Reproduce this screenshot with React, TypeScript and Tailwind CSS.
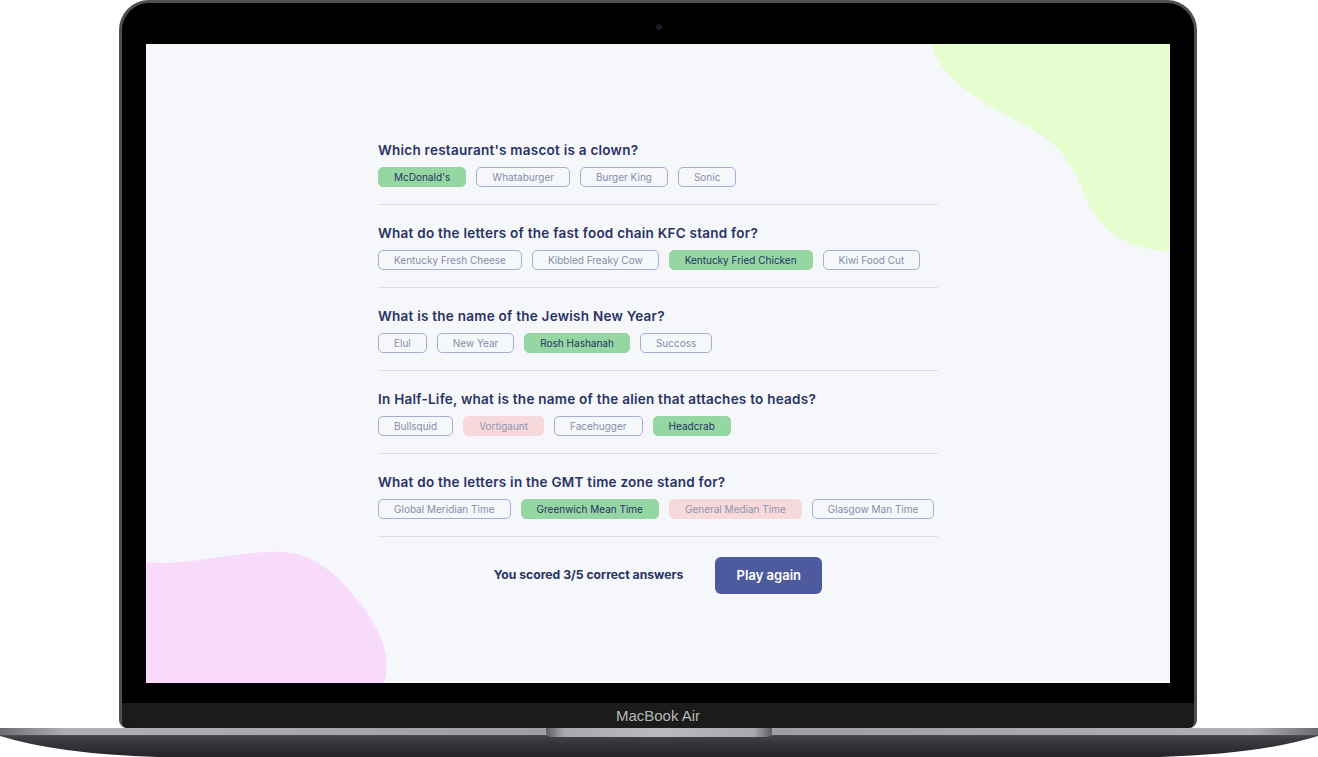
import React from "react";

type Ans = { text: string; state: "none" | "correct" | "wrong" };
type Q = { q: string; answers: Ans[] };

const questions: Q[] = [
  {
    q: "Which restaurant's mascot is a clown?",
    answers: [
      { text: "McDonald's", state: "correct" },
      { text: "Whataburger", state: "none" },
      { text: "Burger King", state: "none" },
      { text: "Sonic", state: "none" },
    ],
  },
  {
    q: "What do the letters of the fast food chain KFC stand for?",
    answers: [
      { text: "Kentucky Fresh Cheese", state: "none" },
      { text: "Kibbled Freaky Cow", state: "none" },
      { text: "Kentucky Fried Chicken", state: "correct" },
      { text: "Kiwi Food Cut", state: "none" },
    ],
  },
  {
    q: "What is the name of the Jewish New Year?",
    answers: [
      { text: "Elul", state: "none" },
      { text: "New Year", state: "none" },
      { text: "Rosh Hashanah", state: "correct" },
      { text: "Succoss", state: "none" },
    ],
  },
  {
    q: "In Half-Life, what is the name of the alien that attaches to heads?",
    answers: [
      { text: "Bullsquid", state: "none" },
      { text: "Vortigaunt", state: "wrong" },
      { text: "Facehugger", state: "none" },
      { text: "Headcrab", state: "correct" },
    ],
  },
  {
    q: "What do the letters in the GMT time zone stand for?",
    answers: [
      { text: "Global Meridian Time", state: "none" },
      { text: "Greenwich Mean Time", state: "correct" },
      { text: "General Median Time", state: "wrong" },
      { text: "Glasgow Man Time", state: "none" },
    ],
  },
];

function AnswerChip({ a }: { a: Ans }) {
  if (a.state === "correct") {
    return (
      <div className="h-[20px] px-[15px] flex items-center whitespace-nowrap rounded-[5px] border-[0.8px] border-[#94d7a2] bg-[#94d7a2] text-[#293264] text-[10px] leading-none">
        {a.text}
      </div>
    );
  }
  if (a.state === "wrong") {
    return (
      <div className="h-[20px] px-[15px] flex items-center whitespace-nowrap rounded-[5px] border-[0.8px] border-[#f7d8db] bg-[#f7d8db] text-[#8f94af] text-[10px] leading-none">
        {a.text}
      </div>
    );
  }
  return (
    <div className="h-[20px] px-[15px] flex items-center whitespace-nowrap rounded-[5px] border-[0.8px] border-[#a7aed2] text-[#878ca9] text-[10px] leading-none">
      {a.text}
    </div>
  );
}

function Screen() {
  return (
    <div className="relative w-[1024px] h-[639px] overflow-hidden bg-[#f5f7fb]">
      <svg
        className="absolute inset-0"
        width="1024"
        height="639"
        viewBox="0 0 1024 639"
      >
        <path
          d="M785,0 C795,35 830,55 880,82 C925,106 928,130 945,165 C962,195 990,205 1024,208 L1024,0 Z"
          fill="#e6fdcf"
        />
        <path
          d="M0,518 C40,523 90,506 137,508 C172,510 195,535 215,560 C236,588 246,615 238,639 L0,639 Z"
          fill="#f8dbfb"
        />
      </svg>
      <div
        className="relative flex flex-col items-center pt-[98px]"
        style={{ fontFamily: "Inter, 'Noto Sans', sans-serif" }}
      >
        <div className="w-[560px] flex flex-col">
          {questions.map((q, i) => (
            <div key={i} className={i === 0 ? "" : "mt-[20px]"}>
              <div className="h-[16px] leading-[16px] text-[13.5px] font-semibold text-[#293264] tracking-[0.25px] whitespace-nowrap">
                {q.q}
              </div>
              <div className="mt-[9px] flex gap-[10px]">
                {q.answers.map((a, j) => (
                  <AnswerChip key={j} a={a} />
                ))}
              </div>
              <div className="mt-[17px] h-px bg-[#dbdef0]" />
            </div>
          ))}
        </div>
        <div className="mt-[20px] flex items-center justify-center gap-8">
          <span className="text-[12.2px] font-bold text-[#293264]">
            You scored 3/5 correct answers
          </span>
          <button className="w-[107px] h-[37px] rounded-[6px] bg-[#4d5b9e] text-white text-[13px] font-semibold">
            Play again
          </button>
        </div>
      </div>
    </div>
  );
}

export default function App() {
  return (
    <div className="w-[1318px] h-[757px] bg-white overflow-hidden flex flex-col">
      <div className="ml-[119px] w-[1078px] h-[728px] relative rounded-t-[30px] rounded-b-[8px] bg-black border-t-[3px] border-x-[3px] border-[#4e4e53] flex flex-col items-center pt-[41px]">
        <div className="absolute left-[534px] top-[21px] w-[6px] h-[6px] rounded-full bg-[#1c1c28]" />
        <Screen />
        <div className="h-[20px]" />
        <div className="w-full h-[25px] bg-[#1b1b1b] rounded-b-[8px] flex items-center justify-center">
          <span
            className="text-[15px] text-[#b8b8b8] leading-none"
            style={{ fontFamily: "'Liberation Sans', Arial, sans-serif" }}
          >
            MacBook Air
          </span>
        </div>
      </div>
      <div className="relative h-[29px] w-[1318px]">
        <svg width="1318" height="29" viewBox="0 0 1318 29" className="absolute inset-0">
          <defs>
            <linearGradient id="baseBody" x1="0" y1="0" x2="0" y2="1">
              <stop offset="0" stopColor="#505056" />
              <stop offset="0.5" stopColor="#36363c" />
              <stop offset="1" stopColor="#24242a" />
            </linearGradient>
            <linearGradient id="baseTop" x1="0" y1="0" x2="1" y2="0">
              <stop offset="0" stopColor="#6b6b70" />
              <stop offset="0.05" stopColor="#b0b0b5" />
              <stop offset="0.5" stopColor="#9a9a9f" />
              <stop offset="0.95" stopColor="#b0b0b5" />
              <stop offset="1" stopColor="#6b6b70" />
            </linearGradient>
            <linearGradient id="notch" x1="0" y1="0" x2="1" y2="0">
              <stop offset="0" stopColor="#5c5c62" />
              <stop offset="0.08" stopColor="#a9a9ae" />
              <stop offset="0.5" stopColor="#b9b9be" />
              <stop offset="0.92" stopColor="#a9a9ae" />
              <stop offset="1" stopColor="#5c5c62" />
            </linearGradient>
          </defs>
          <path
            d="M0,0 L1318,0 L1318,8 Q1260,26 1160,29 L158,29 Q58,26 0,8 Z"
            fill="url(#baseBody)"
          />
          <path d="M0,0 L1318,0 L1318,7 L0,7 Z" fill="url(#baseTop)" />
          <path d="M0,7 L1318,7 L1318,8 L0,8 Z" fill="#4a4a50" />
          <path
            d="M427,0 L653,0 L653,4 Q653,9 647,9 L433,9 Q427,9 427,4 Z"
            transform="translate(119,0)"
            fill="url(#notch)"
          />
        </svg>
      </div>
    </div>
  );
}
